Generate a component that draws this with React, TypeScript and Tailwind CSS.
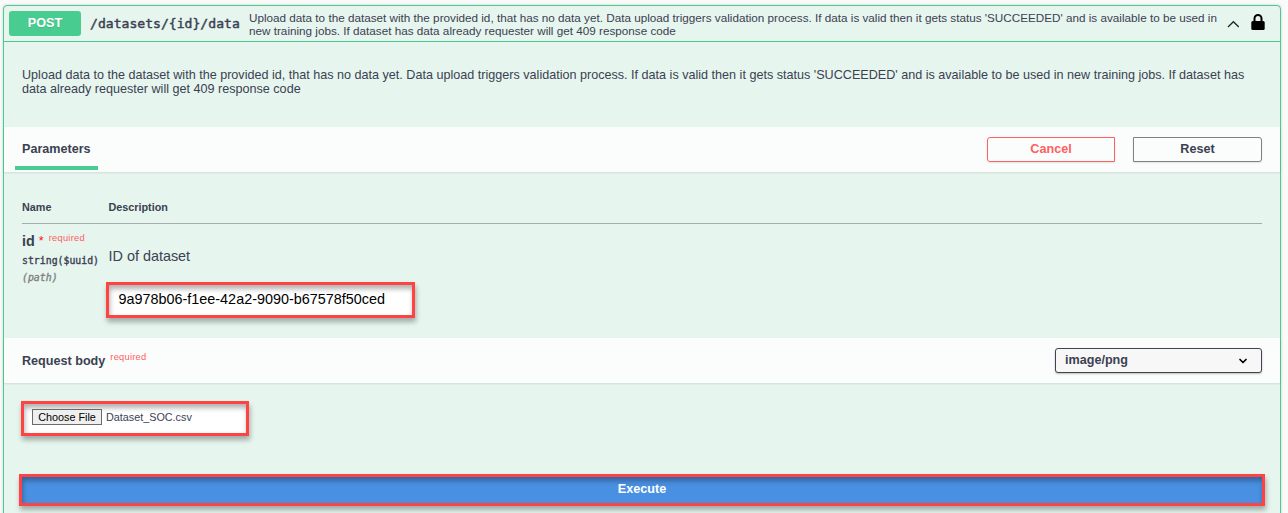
import { ChevronDown } from 'lucide-react';

const summary = [
  "Upload data to the dataset with the provided id, that has no data yet. Data upload triggers validation process. If data is valid then it gets status 'SUCCEEDED' and is available to be used in",
  'new training jobs. If dataset has data already requester will get 409 response code',
];

const description = [
  "Upload data to the dataset with the provided id, that has no data yet. Data upload triggers validation process. If data is valid then it gets status 'SUCCEEDED' and is available to be used in new training jobs. If dataset has",
  'data already requester will get 409 response code',
];

const highlight =
  'border-3 border-[#ff4242] shadow-[1px_4px_5px_rgba(0,0,0,0.3),inset_1px_4px_5px_rgba(0,0,0,0.3)]';

function OperationHeader() {
  return (
    <header className="flex h-[36px] shrink-0 items-center border-b border-[#49cc90] pl-[5px] pr-[15px]">
      <span className="flex h-[25px] w-[72px] items-center justify-center rounded-[3px] bg-[#49cc90] text-[12.6px] font-bold text-white [text-shadow:0_1px_0_rgba(0,0,0,0.1)]">
        POST
      </span>
      <span className="ml-[9px] w-[159px] font-['DejaVu_Sans_Mono',monospace] text-[13.1px] whitespace-nowrap [-webkit-text-stroke:0.45px_#3b4151]">
        /datasets/&#123;id&#125;/data
      </span>
      <p className="flex-1 text-[11.71px] leading-[13px] whitespace-nowrap">
        {summary.map((line) => (
          <span key={line} className="block">{line}</span>
        ))}
      </p>
      <svg className="mr-[12px] h-[12px] w-[12px]" viewBox="0 0 12 12" fill="none" stroke="#222" strokeWidth="1.2">
        <path d="M1 9 6.4 3.7 11.8 9" />
      </svg>
      <svg className="-mt-[2px] h-[17px] w-[14px]" viewBox="0 0 14 17">
        <path d="M3.5 8V4.5a3.5 3.5 0 0 1 7 0V8" fill="none" stroke="#000" strokeWidth="2" />
        <rect x=".3" y="7" width="13.4" height="9" rx="1.5" />
      </svg>
    </header>
  );
}

function ParametersBar() {
  return (
    <div className="flex h-[45px] shrink-0 items-start bg-white/80 pr-[18px] shadow-[0_1px_2px_rgba(0,0,0,0.1)]">
      <h4 className="ml-[11px] h-[43px] w-[83px] border-b-4 border-[#49cc90] pt-[15px] pl-[7px] text-[12.6px] leading-[14px] font-bold">
        Parameters
      </h4>
      <div className="mt-[10px] ml-auto flex gap-[18px] text-[12.6px] leading-[21px] font-bold">
        <button className="h-[25px] w-[128px] rounded-l-[3px] border border-[#ff6060] pb-px text-[#ff6060] shadow-[0_1px_2px_rgba(0,0,0,0.1)]">
          Cancel
        </button>
        <button className="h-[25px] w-[129px] rounded-r-[3px] border border-[#808080] pb-px shadow-[0_1px_2px_rgba(0,0,0,0.1)]">
          Reset
        </button>
      </div>
    </div>
  );
}

function ParametersTable() {
  return (
    <section className="flex h-[166px] shrink-0 flex-col pr-[18px] pl-[18px]">
      <div className="flex h-[52px] shrink-0 items-end border-b border-[#a3aeaa] pb-[9px] text-[10.8px] leading-[13px] font-bold">
        <span className="w-[86.5px]">Name</span>
        <span>Description</span>
      </div>
      <div className="flex">
        <div className="w-[86.5px] whitespace-nowrap">
          <div className="flex pt-[8px]">
            <span className="text-[14.4px] leading-[18px] font-bold">id</span>
            <span className="ml-[4px] text-[12.6px] leading-[18px] text-[#ff1010]">*</span>
            <span className="mt-[1px] ml-[5px] text-[9.3px] leading-[10px] tracking-[0.25px] text-[#ff6060]">required</span>
          </div>
          <div className="mt-[4px] font-['DejaVu_Sans_Mono',monospace] text-[9.85px] leading-[14px] [-webkit-text-stroke:0.35px_#3b4151]">
            string($uuid)
          </div>
          <div className="mt-[3px] font-['DejaVu_Sans_Mono',monospace] text-[9.85px] leading-[14px] text-[#808080] italic [-webkit-text-stroke:0.35px_#808080]">
            (path)
          </div>
        </div>
        <div className="pt-[24px]">
          <p className="text-[14.4px] leading-[17px]">ID of dataset</p>
          <div className={`mt-[17px] -ml-[2.5px] h-[36px] w-[309px] bg-white pt-[5px] pl-[9.5px] text-[14.4px] leading-[18px] text-black ${highlight}`}>
            9a978b06-f1ee-42a2-9090-b67578f50ced
          </div>
        </div>
      </div>
    </section>
  );
}

function RequestBodyBar() {
  return (
    <div className="flex h-[45px] shrink-0 items-center bg-white/80 pr-[18px] pl-[18px] shadow-[0_1px_2px_rgba(0,0,0,0.1)]">
      <h4 className="pt-[2px] text-[12.6px] font-bold">Request body</h4>
      <span className="-mt-[8px] ml-[5px] text-[9.3px] leading-[10px] tracking-[0.25px] text-[#ff6060]">required</span>
      <div className="ml-auto flex h-[25px] w-[207px] items-center justify-between rounded-[3px] border border-[#41444e] bg-[#f7f7f7] pr-[12px] pl-[9px] text-[12.6px] font-bold shadow-[0_1px_2px_rgba(0,0,0,0.25)]">
        image/png
        <ChevronDown className="h-[12px] w-[12px] text-black" strokeWidth={3.4} />
      </div>
    </div>
  );
}

function RequestBody() {
  return (
    <section className="flex flex-col pt-[18px] pl-[17px]">
      <div className={`flex h-[35px] w-[228px] items-start bg-white pt-[5px] pl-[8px] text-[10.8px] leading-[14px] ${highlight}`}>
        <button className="h-[16px] w-[70px] border border-[#6b6b6b] bg-[#efefef] text-black">Choose File</button>
        <span className="ml-[4px] pt-[1px]">Dataset_SOC.csv</span>
      </div>
      <button className={`mt-[38px] -ml-[2px] h-[32px] w-[1246px] bg-[#4990e2] pb-[3px] text-[12.6px] leading-[14px] font-bold text-white ${highlight}`}>
        Execute
      </button>
    </section>
  );
}

export default function App() {
  return (
    <main className="h-[513px] w-[1288px] overflow-hidden bg-[#fafafa] pt-[5px] pl-[3px] font-['Liberation_Sans',Arial,sans-serif] text-[#3b4151]">
      <article className="flex h-[530px] w-[1278px] flex-col rounded-[4px] border border-[#49cc90] bg-[#e6f5ee] shadow-[0_0_3px_rgba(0,0,0,0.19)]">
        <OperationHeader />
        <p className="h-[85px] shrink-0 pt-[26px] pl-[18px] text-[12.6px] leading-[14px] whitespace-nowrap">
          {description.map((line) => (
            <span key={line} className="block">{line}</span>
          ))}
        </p>
        <ParametersBar />
        <ParametersTable />
        <RequestBodyBar />
        <RequestBody />
      </article>
    </main>
  );
}
